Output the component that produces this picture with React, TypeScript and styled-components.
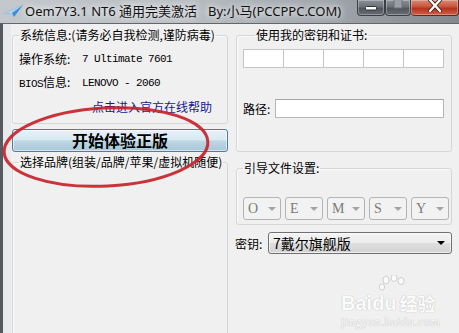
import styled, { createGlobalStyle } from 'styled-components'

const cjk = `"Noto Sans CJK SC", "Noto Sans", sans-serif`
const mono = `"Liberation Mono", "DejaVu Sans Mono", monospace`

const GlobalStyle = createGlobalStyle`
  html, body {
    margin: 0;
    padding: 0;
    background: #f0f0f0;
  }
  body {
    font-family: ${cjk};
    font-size: 12px;
    color: #000;
  }
`

const Window = styled.div`
  position: relative;
  width: 459px;
  height: 333px;
  overflow: hidden;
  display: flex;
  flex-direction: column;
  background: #f0f0f0;
`

const TitleBar = styled.div`
  flex: none;
  height: 23px;
  display: flex;
  align-items: flex-start;
  background: linear-gradient(to right, #c4c8cc 0%, #b8bdc2 40%, #a2a7ad 70%, #83888e 100%);
`

const AppIcon = styled.svg`
  flex: none;
  margin: 5px 2px 0 3px;
`

const TitleText = styled.span<{ $w?: number }>`
  flex: none;
  width: ${(p) => (p.$w ? `${p.$w}px` : 'auto')};
  font-family: "Noto Sans", ${cjk};
  font-size: 13px;
  line-height: 22px;
  color: #111;
  white-space: nowrap;
  text-shadow: 0 0 6px rgba(255, 255, 255, 0.95), 0 0 10px rgba(255, 255, 255, 0.8);
`

const Controls = styled.div`
  margin-left: auto;
  display: flex;
`

const CaptionButton = styled.div<{ $w: number; $close?: boolean }>`
  box-sizing: border-box;
  width: ${(p) => p.$w}px;
  height: 16px;
  display: flex;
  align-items: flex-start;
  justify-content: center;
  border: 1px solid ${(p) => (p.$close ? '#5c2920' : '#3b3f45')};
  border-top: none;
  border-left-width: ${(p) => (p.$close ? '0' : '1px')};
  border-radius: 0 0 4px 4px;
  background: ${(p) =>
    p.$close
      ? 'linear-gradient(#d88a74, #c9553e 45%, #b5321c 55%, #cf6048)'
      : 'linear-gradient(#8c9198, #6c7178 45%, #51565d 55%, #686d74)'};
  box-shadow: inset 0 0 0 1px rgba(255, 255, 255, 0.3);
`

const Client = styled.div`
  flex: 1;
  display: flex;
  gap: 8px;
  padding-left: 9px;
  border-left: 3px solid #575b61;
  border-top: 1px solid #62676d;
  background: linear-gradient(to right, #e9eaeb 0, #e9eaeb 8px, #f0f0f0 8px);
`

const Column = styled.div`
  flex: none;
  width: 216px;
  display: flex;
  flex-direction: column;
`

const GroupBox = styled.fieldset<{ $top: number; $pad: string; $grow?: boolean }>`
  box-sizing: border-box;
  min-width: 0;
  margin: ${(p) => p.$top}px 0 0 0;
  padding: ${(p) => p.$pad};
  border: 1px solid #d3d7da;
  border-radius: 3px;
  box-shadow: inset 1px 1px 0 #fbfbfb;
  ${(p) => (p.$grow ? 'min-height: 220px;' : '')}
`

const Legend = styled.legend<{ $offset?: number }>`
  margin-left: ${(p) => p.$offset ?? 0}px;
  padding: 0 1px;
  font-size: 12px;
  line-height: 16px;
  white-space: nowrap;
  color: #000;
`

const InfoRow = styled.div`
  display: flex;
  align-items: center;
  height: 24px;
  line-height: 24px;
  white-space: nowrap;
`

const InfoLabel = styled.span`
  flex: none;
  width: 63px;
`

const Mono = styled.span`
  font-family: ${mono};
  font-size: 11px;
  letter-spacing: -0.6px;
`

const HelpLink = styled.span`
  padding-left: 73px;
  color: #17178e;
`

const StartButton = styled.button`
  box-sizing: border-box;
  margin-top: 5px;
  width: 216px;
  height: 23px;
  padding: 0;
  border: 1px solid #4d7f9c;
  border-radius: 3px;
  background: linear-gradient(#e7f2f7 0%, #d9e9f1 48%, #bdd7e4 52%, #a8c8d7 100%);
  box-shadow: inset 0 0 0 1px rgba(255, 255, 255, 0.55);
  font-family: ${cjk};
  font-size: 16px;
  font-weight: 700;
  line-height: 21px;
  color: #000;
`

const CellRow = styled.div`
  display: flex;
`

const Cell = styled.div`
  box-sizing: border-box;
  width: 41px;
  height: 19px;
  background: #fff;
  border: 1px solid #c3c6c9;
  & + & {
    margin-left: -1px;
  }
`

const PathRow = styled.div`
  display: flex;
  align-items: center;
  margin-top: 31px;
`

const FieldLabel = styled.span<{ $w: number; $shift?: number }>`
  flex: none;
  width: ${(p) => p.$w}px;
  margin-left: ${(p) => p.$shift ?? 0}px;
  font-size: 12px;
  white-space: nowrap;
`

const TextBox = styled.div`
  box-sizing: border-box;
  flex: 1;
  height: 19px;
  background: #fff;
  border: 1px solid #b5b8bb;
  border-top-color: #a3a6a9;
`

const DropRow = styled.div`
  display: flex;
  gap: 4px;
`

const DropBox = styled.div`
  box-sizing: border-box;
  width: 38px;
  height: 23px;
  display: flex;
  align-items: center;
  justify-content: space-between;
  padding: 0 4px 0 4px;
  background: #f2f2f2;
  border: 1px solid #b1b5b8;
  border-radius: 3px;
  font-family: "Liberation Serif", serif;
  font-size: 14px;
  color: #7a7a7a;
`

const Arrow = styled.span<{ $dark?: boolean }>`
  width: 0;
  height: 0;
  border-left: 4px solid transparent;
  border-right: 4px solid transparent;
  border-top: 4px solid ${(p) => (p.$dark ? '#000' : '#a4a4a4')};
`

const KeyRow = styled.div`
  display: flex;
  align-items: center;
  margin-top: 7px;
`

const Combo = styled.div`
  box-sizing: border-box;
  flex: 1;
  height: 22px;
  display: flex;
  align-items: center;
  justify-content: space-between;
  padding: 0 6px 0 4px;
  border: 1px solid #707070;
  border-radius: 3px;
  background: linear-gradient(#f4f4f4 0%, #ececec 48%, #dedede 52%, #d2d2d2 100%);
  box-shadow: inset 0 0 0 1px rgba(255, 255, 255, 0.6);
  font-size: 14px;
  line-height: 20px;
`

const Overlay = styled.svg`
  position: absolute;
  left: 0;
  top: 0;
  pointer-events: none;
`

const Watermark = styled.div`
  position: absolute;
  left: 341px;
  top: 275px;
  display: flex;
  flex-direction: column;
  align-items: flex-start;
  pointer-events: none;
  color: #fbfbfb;
  text-shadow: 0 0 1px #bdbdbd, 0 0 1px #c8c8c8;
`

const MarkLine = styled.div`
  display: flex;
  align-items: flex-end;
  font-family: "Liberation Sans", sans-serif;
  font-weight: 700;
  font-size: 20px;
  line-height: 20px;
`

const MarkCjk = styled.span`
  font-family: ${cjk};
  font-weight: 700;
  font-size: 18px;
  margin-left: 3px;
`

const MarkUrl = styled.div`
  font-family: "Liberation Serif", serif;
  font-size: 12px;
  line-height: 14px;
  margin-top: 2px;
  letter-spacing: 0.6px;
`

const letters = ['O', 'E', 'M', 'S', 'Y']

export default function App() {
  return (
    <>
      <GlobalStyle />
      <Window>
        <TitleBar>
          <AppIcon width="20" height="12" viewBox="0 0 20 12">
            <path d="M0 9 L20 0 L11 12 L9 8 Z" fill="#3f8fd2" />
            <path d="M0 9 L20 0 L9 8 Z" fill="#a9d6f2" />
          </AppIcon>
          <TitleText $w={183}>Oem7Y3.1 NT6 通用完美激活</TitleText>
          <TitleText>By:小马(PCCPPC.COM)</TitleText>
          <Controls>
            <CaptionButton $w={28}>
              <svg width="14" height="12" viewBox="0 0 14 12">
                <rect x="1.5" y="6.5" width="11" height="3.5" rx="1" fill="#fff" stroke="#333" strokeWidth="1" />
              </svg>
            </CaptionButton>
            <CaptionButton $w={26}>
              <svg width="12" height="10" viewBox="0 0 12 10">
                <rect x="2" y="-2" width="8" height="10" fill="#9a9fa5" stroke="#6d7278" strokeWidth="1" />
              </svg>
            </CaptionButton>
            <CaptionButton $w={48} $close>
              <svg width="16" height="12" viewBox="0 0 16 12">
                <path d="M3 0 L13 11 M13 0 L3 11" stroke="#3a1a14" strokeWidth="4" strokeLinecap="round" />
                <path d="M3 0 L13 11 M13 0 L3 11" stroke="#fff" strokeWidth="2.4" strokeLinecap="round" />
              </svg>
            </CaptionButton>
          </Controls>
        </TitleBar>

        <Client>
          <Column>
            <GroupBox $top={3} $pad="4px 6px 4px 6px">
              <Legend>系统信息:(请务必自我检测,谨防病毒)</Legend>
              <InfoRow>
                <InfoLabel>操作系统:</InfoLabel>
                <Mono>7 Ultimate 7601</Mono>
              </InfoRow>
              <InfoRow>
                <InfoLabel>
                  <Mono>BIOS</Mono>信息:
                </InfoLabel>
                <Mono>LENOVO - 2060</Mono>
              </InfoRow>
              <InfoRow>
                <HelpLink>点击进入官方在线帮助</HelpLink>
              </InfoRow>
            </GroupBox>
            <StartButton>开始体验正版</StartButton>
            <GroupBox $top={2} $pad="4px 6px" $grow>
              <Legend>选择品牌(组装/品牌/苹果/虚拟机随便)</Legend>
            </GroupBox>
          </Column>

          <Column>
            <GroupBox $top={3} $pad="6px 7px 33px 6px">
              <Legend $offset={12}>使用我的密钥和证书:</Legend>
              <CellRow>
                {[0, 1, 2, 3, 4].map((i) => (
                  <Cell key={i} />
                ))}
              </CellRow>
              <PathRow>
                <FieldLabel $w={32}>路径:</FieldLabel>
                <TextBox />
              </PathRow>
            </GroupBox>
            <GroupBox $top={8} $pad="21px 1px 4px 6px">
              <Legend>引导文件设置:</Legend>
              <DropRow>
                {letters.map((l) => (
                  <DropBox key={l}>
                    <span>{l}</span>
                    <Arrow />
                  </DropBox>
                ))}
              </DropRow>
            </GroupBox>
            <KeyRow>
              <FieldLabel $w={33} $shift={-1}>
                密钥:
              </FieldLabel>
              <Combo>
                <span>7戴尔旗舰版</span>
                <Arrow $dark />
              </Combo>
            </KeyRow>
          </Column>
        </Client>

        <Overlay width="459" height="333" viewBox="0 0 459 333">
          <ellipse
            cx="106"
            cy="147"
            rx="102"
            ry="39"
            transform="rotate(-3 106 147)"
            fill="none"
            stroke="#c8232b"
            strokeOpacity="0.92"
            strokeWidth="3"
          />
        </Overlay>

        <Watermark>
          <svg width="30" height="18" viewBox="0 0 30 18" style={{ marginLeft: 36 }}>
            <g fill="#fbfbfb" stroke="#c4c4c4" strokeWidth="0.8">
              <ellipse cx="9" cy="5" rx="3" ry="4" />
              <ellipse cx="17" cy="3" rx="3" ry="3.5" />
              <ellipse cx="24" cy="6" rx="3" ry="3.5" />
              <ellipse cx="5" cy="12" rx="2.6" ry="3.2" />
            </g>
          </svg>
          <MarkLine>
            <span>Bai</span>
            <span>du</span>
            <MarkCjk>经验</MarkCjk>
          </MarkLine>
          <MarkUrl>jingyan.baidu.com</MarkUrl>
        </Watermark>
      </Window>
    </>
  )
}
